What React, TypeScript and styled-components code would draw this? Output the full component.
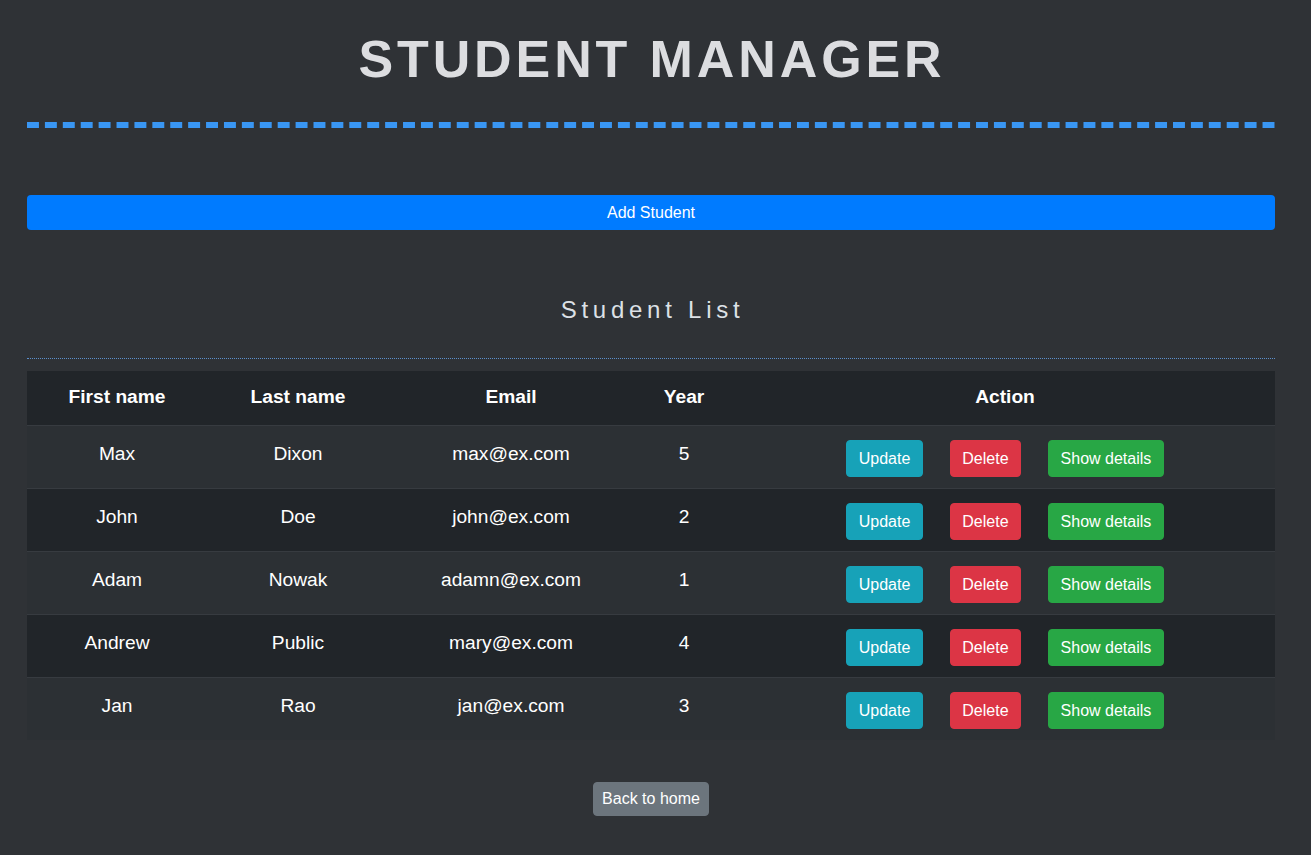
import React from "react";
import styled, { createGlobalStyle } from "styled-components";

const GlobalStyle = createGlobalStyle`
  html, body {
    margin: 0;
    padding: 0;
    background: #2f3236;
    font-family: "Liberation Sans", Arial, Helvetica, sans-serif;
    color: #fff;
  }
  * { box-sizing: border-box; }
`;

const Page = styled.div`
  width: 1248px;
  margin: 0 0 0 27px;
  padding-top: 28px;
  padding-bottom: 40px;
  display: flex;
  flex-direction: column;
`;

const Title = styled.h1`
  margin: 0;
  font-size: 52px;
  line-height: 62px;
  font-weight: 700;
  letter-spacing: 3.9px;
  text-align: center;
  color: #dcdde0;
  text-indent: 2px;
`;

const DashedRule = styled.div`
  margin-top: 32px;
  height: 6px;
  width: 100%;
  background-image: linear-gradient(to right, #3996f3 12px, transparent 12px);
  background-size: 17.914px 100%;
  background-repeat: repeat-x;
`;

const PrimaryWide = styled.button`
  margin-top: 67px;
  width: 100%;
  height: 35px;
  border: none;
  border-radius: 4px;
  background: #007bff;
  color: #fff;
  font-family: inherit;
  font-size: 16px;
  line-height: 35px;
  padding: 0;
  cursor: pointer;
`;

const SubTitle = styled.h2`
  margin: 65px 0 0;
  font-size: 24px;
  line-height: 29px;
  font-weight: 400;
  letter-spacing: 4.75px;
  text-indent: 3px;
  text-align: center;
  color: #dde1e6;
`;

const DottedRule = styled.div`
  margin-top: 34px;
  border-top: 1px dotted #5b8fcc;
`;

const Table = styled.table`
  margin-top: 12px;
  width: 100%;
  border-collapse: collapse;
  table-layout: fixed;
  font-size: 19.2px;
  line-height: 1.5;
`;

const HeadCell = styled.th<{ $w: number }>`
  width: ${(p) => p.$w}px;
  height: 54px;
  background: #212529;
  color: #fff;
  font-weight: 700;
  padding: 12px 12px 13px;
  text-align: center;
  vertical-align: middle;
`;

const Row = styled.tr<{ $striped: boolean }>`
  background: ${(p) => (p.$striped ? "#2c3034" : "#212529")};
  border-top: 1px solid #373b40;
`;

const Cell = styled.td`
  height: 63px;
  padding: 14px 12px 10px;
  text-align: center;
  vertical-align: top;
  color: #fff;
`;

const Actions = styled.div`
  display: flex;
  justify-content: center;
  gap: 27px;
`;

const ActionButton = styled.button<{ $bg: string }>`
  background: ${(p) => p.$bg};
  border: 1px solid ${(p) => p.$bg};
  border-radius: 4px;
  color: #fff;
  font-family: inherit;
  font-size: 16px;
  line-height: 23px;
  padding: 6px 11.5px;
  cursor: pointer;
`;

const Footer = styled.div`
  display: flex;
  justify-content: center;
  margin-top: 42px;
`;

const BackButton = styled.button`
  background: #6c757d;
  border: 1px solid #6c757d;
  border-radius: 4px;
  color: #fff;
  font-family: inherit;
  font-size: 16px;
  line-height: 24px;
  padding: 4px 8px;
  cursor: pointer;
`;

const students = [
  { first: "Max", last: "Dixon", email: "max@ex.com", year: 5 },
  { first: "John", last: "Doe", email: "john@ex.com", year: 2 },
  { first: "Adam", last: "Nowak", email: "adamn@ex.com", year: 1 },
  { first: "Andrew", last: "Public", email: "mary@ex.com", year: 4 },
  { first: "Jan", last: "Rao", email: "jan@ex.com", year: 3 },
];

const columns: [string, number][] = [
  ["First name", 180],
  ["Last name", 182],
  ["Email", 244],
  ["Year", 102],
  ["Action", 540],
];

export default function App() {
  return (
    <>
      <GlobalStyle />
      <Page>
        <Title>STUDENT MANAGER</Title>
        <DashedRule />
        <PrimaryWide>Add Student</PrimaryWide>
        <SubTitle>Student List</SubTitle>
        <DottedRule />
        <Table>
          <thead>
            <tr>
              {columns.map(([label, w]) => (
                <HeadCell key={label} $w={w}>
                  {label}
                </HeadCell>
              ))}
            </tr>
          </thead>
          <tbody>
            {students.map((s, i) => (
              <Row key={s.email} $striped={i % 2 === 0}>
                <Cell>{s.first}</Cell>
                <Cell>{s.last}</Cell>
                <Cell>{s.email}</Cell>
                <Cell>{s.year}</Cell>
                <Cell>
                  <Actions>
                    <ActionButton $bg="#17a2b8">Update</ActionButton>
                    <ActionButton $bg="#dc3545">Delete</ActionButton>
                    <ActionButton $bg="#28a745">Show details</ActionButton>
                  </Actions>
                </Cell>
              </Row>
            ))}
          </tbody>
        </Table>
        <Footer>
          <BackButton>Back to home</BackButton>
        </Footer>
      </Page>
    </>
  );
}
